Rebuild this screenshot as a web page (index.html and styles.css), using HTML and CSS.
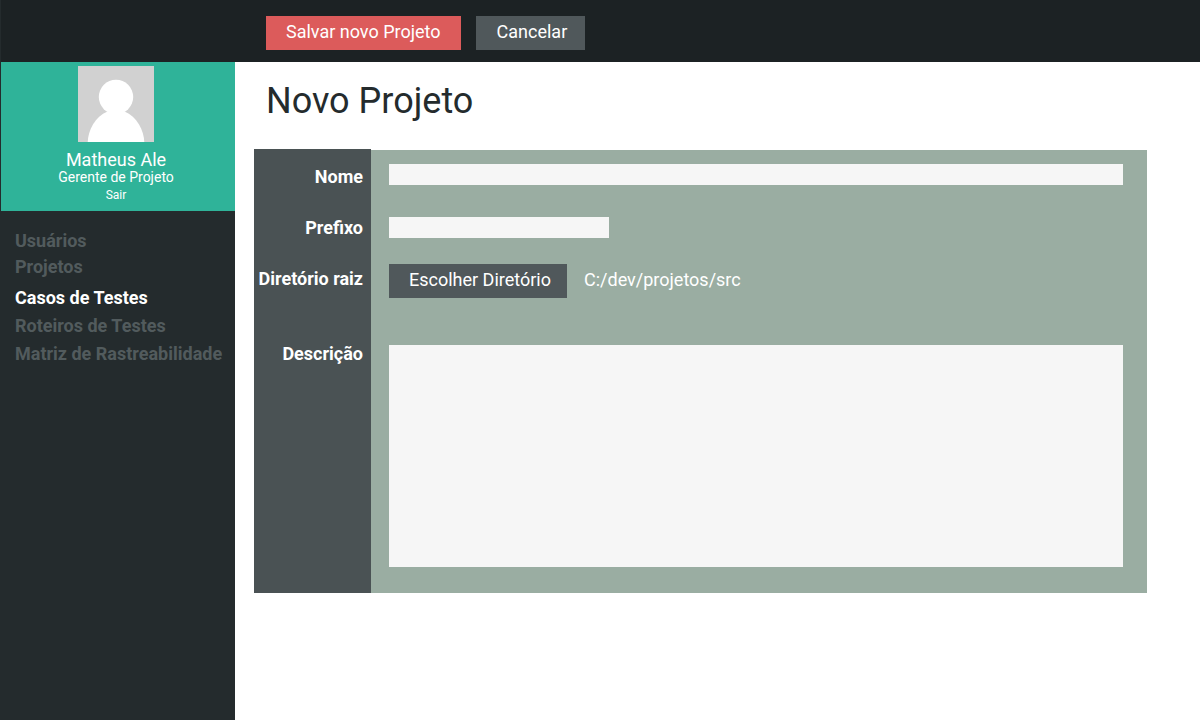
FILE: index.html
```html
<!DOCTYPE html>
<html lang="pt-BR">
<head>
<meta charset="utf-8">
<meta name="viewport" content="width=device-width, initial-scale=1">
<title>Novo Projeto</title>
<link rel="stylesheet" href="styles.css">
</head>
<body class="page">
<header class="topbar">
  <button class="btn btn-primary" type="submit" form="project-form">Salvar novo Projeto</button>
  <button class="btn" type="button">Cancelar</button>
</header>
<div class="layout">
  <aside class="sidebar">
    <section class="profile">
      <svg class="avatar" viewBox="0 0 76 76" role="img" aria-label="Foto do usuário">
        <rect width="76" height="76" fill="#d1d1d1"/>
        <circle cx="38" cy="31" r="17.2" fill="#fff"/>
        <path d="M9.700 76C10.200 64 17 50.500 29.500 45.500H46.500C59 50.500 65.800 64 66.300 76Z" fill="#fff"/>
      </svg>
      <strong class="profile-name">Matheus Ale</strong>
      <span class="profile-role">Gerente de Projeto</span>
      <a class="profile-exit" href="#sair">Sair</a>
    </section>
    <nav class="menu">
      <a class="menu-link" href="#usuarios">Usuários</a>
      <a class="menu-link" href="#projetos">Projetos</a>
      <a class="menu-link menu-link-active" href="#casos" aria-current="page">Casos de Testes</a>
      <a class="menu-link" href="#roteiros">Roteiros de Testes</a>
      <a class="menu-link" href="#matriz">Matriz de Rastreabilidade</a>
    </nav>
  </aside>
  <main class="content">
    <h1 class="title">Novo Projeto</h1>
    <form class="form" id="project-form">
      <div class="labels">
        <label class="label" for="nome">Nome</label>
        <label class="label" for="prefixo">Prefixo</label>
        <label class="label" for="diretorio">Diretório raiz</label>
        <label class="label label-description" for="descricao">Descrição</label>
      </div>
      <div class="fields">
        <input class="field" id="nome" name="nome" type="text">
        <input class="field field-short" id="prefixo" name="prefixo" type="text">
        <div class="directory">
          <button class="btn btn-directory" id="diretorio" type="button">Escolher Diretório</button>
          <span class="path">C:/dev/projetos/src</span>
        </div>
        <textarea class="field field-area" id="descricao" name="descricao"></textarea>
      </div>
    </form>
  </main>
</div>
</body>
</html>
```

FILE: styles.css
```css
* {
  box-sizing: border-box;
}

.page {
  display: flex;
  flex-direction: column;
  min-height: 100vh;
  margin: 0;
  border-left: 1px solid #242b2d;
  background: #fff;
  color: #242b2d;
  font-family: Roboto, sans-serif;
  font-size: 18px;
  line-height: 20px;
}

.topbar {
  display: flex;
  gap: 15px;
  padding: 16px 16px 12px 265px;
  background: #1c2224;
}

.btn {
  height: 34px;
  padding: 0 18px 2px 21px;
  border: 0;
  background: #50585b;
  color: #fff;
  font: inherit;
  white-space: nowrap;
  cursor: pointer;
}

.btn-primary {
  padding: 0 20px 2px;
  background: #dc5b5b;
}

.layout {
  display: flex;
  flex: 1;
}

.sidebar {
  flex: 0 0 234px;
  background: #242b2d;
}

.profile {
  display: flex;
  flex-direction: column;
  align-items: center;
  padding: 4px 4px 8px 0;
  background: #2fb399;
  color: #fff;
}

.avatar {
  width: 76px;
  height: 76px;
  margin-bottom: 8px;
}

.profile-name {
  font-weight: 400;
}

.profile-role {
  font-size: 14px;
  line-height: 15px;
}

.profile-exit {
  color: inherit;
  font-size: 12px;
  line-height: 18px;
  padding-top: 1px;
  margin-bottom: -1px;
  text-decoration: none;
}

.menu {
  display: flex;
  flex-direction: column;
  padding: 17px 0 16px 14px;
}

.menu-link {
  color: #525b5d;
  font-weight: 700;
  line-height: 26px;
  text-decoration: none;
  white-space: nowrap;
}

.menu-link-active {
  margin-top: 5px;
  color: #fff;
}

.menu-link-active ~ .menu-link {
  margin-top: 2px;
}

.content {
  flex: 1;
  min-width: 0;
  padding: 19px 53px 24px 19px;
}

.title {
  margin: 0 0 28px 12px;
  font-size: 36px;
  font-weight: 400;
  line-height: 40px;
}

.form {
  display: flex;
  align-items: stretch;
}

.labels {
  display: flex;
  flex: 0 0 117px;
  flex-direction: column;
  gap: 31px;
  padding: 18px 8px 0 0;
  background: #4a5254;
  color: #fff;
  font-weight: 700;
  text-align: right;
  white-space: nowrap;
}

.label-description {
  margin-top: 24px;
}

.fields {
  display: flex;
  flex: 1;
  flex-direction: column;
  min-width: 0;
  margin-top: 1px;
  padding: 14px 24px 26px 18px;
  background: #9aada2;
}

.field {
  width: 100%;
  height: 21px;
  padding: 0 6px;
  border: 0;
  border-radius: 0;
  background: #f6f6f6;
  color: #242b2d;
  font: inherit;
}

.field-short {
  width: 220px;
  margin-top: 32px;
}

.directory {
  display: flex;
  gap: 17px;
  margin: 26px 0 47px;
  color: #fff;
}

.btn-directory {
  padding: 0 16px 2px 20px;
}

.path {
  line-height: 32px;
}

.field-area {
  display: block;
  height: 222px;
  padding: 6px;
  resize: none;
}
```
